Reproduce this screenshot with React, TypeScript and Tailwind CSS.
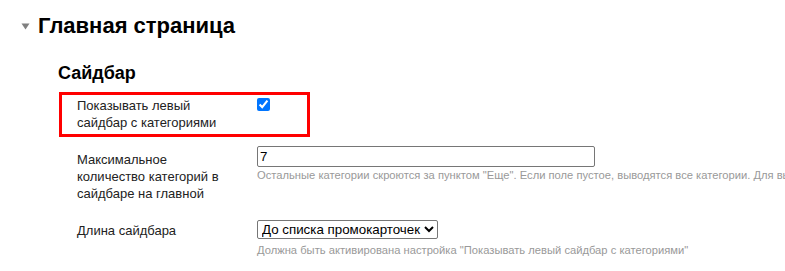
import React from 'react';

const Row: React.FC<{ label: React.ReactNode; labelTop: string; children: React.ReactNode }> = ({
  label,
  labelTop,
  children,
}) => (
  <div className="flex pl-[18px]">
    <div className={`w-[180px] shrink-0 pr-[30px] text-[13px] leading-[17px] text-[#222] ${labelTop}`}>{label}</div>
    <div className="min-w-0 flex-1">{children}</div>
  </div>
);

export default function App() {
  return (
    <div className="h-[271px] w-[785px] overflow-hidden bg-white font-['Liberation_Sans',Arial,sans-serif] text-black">
      {/* section heading */}
      <div className="flex items-center pl-[21px] pt-[13px]">
        <svg width="9" height="7" viewBox="0 0 9 7" className="mr-[8px] mt-[1px]">
          <path d="M0.5 0.5 L8.5 0.5 L4.5 6.5 Z" fill="#808080" />
        </svg>
        <h1 className="text-[22px] font-bold leading-[26px]">Главная страница</h1>
      </div>

      <h2 className="mt-[24px] pl-[58px] text-[18px] font-bold leading-[21px]">Сайдбар</h2>

      <div className="ml-[59px] mt-[8px]">
        {/* highlighted row */}
        <div className="flex w-[251px] border-[3px] border-[#ff0000] pb-[3px] pl-[15px] pt-[2px]">
          <div className="w-[180px] shrink-0 pr-[30px] text-[13px] leading-[17px] text-[#222]">
            Показывать левый сайдбар с категориями
          </div>
          <input type="checkbox" defaultChecked className="mt-[1px] h-[13px] w-[13px] accent-[#0075ff]" />
        </div>

        <div className="mt-[9px]">
          <Row label="Максимальное количество категорий в сайдбаре на главной" labelTop="pt-[5px]">
            <input
              type="text"
              defaultValue="7"
              className="block h-[21px] w-[338px] rounded-[2px] border border-[#767676] px-[2px] text-[13.33px] text-black"
            />
            <p className="mt-[2px] whitespace-nowrap text-[11.2px] leading-[13px] text-[#999]">
              Остальные категории скроются за пунктом "Еще". Если поле пустое, выводятся все категории. Для вывода
              всех категорий оставьте поле пустым
            </p>
          </Row>
        </div>

        <div className="mt-[18px]">
          <Row label="Длина сайдбара" labelTop="pt-[2px]">
            <select
              defaultValue="promo"
              className="block h-[19px] rounded-[2px] border border-[#767676] text-[13.33px] text-black"
            >
              <option value="promo">До списка промокарточек</option>
              <option value="all">Во всю высоту</option>
            </select>
            <p className="mt-[5px] whitespace-nowrap text-[11.2px] leading-[13px] text-[#999]">
              Должна быть активирована настройка "Показывать левый сайдбар с категориями"
            </p>
          </Row>
        </div>
      </div>
    </div>
  );
}
